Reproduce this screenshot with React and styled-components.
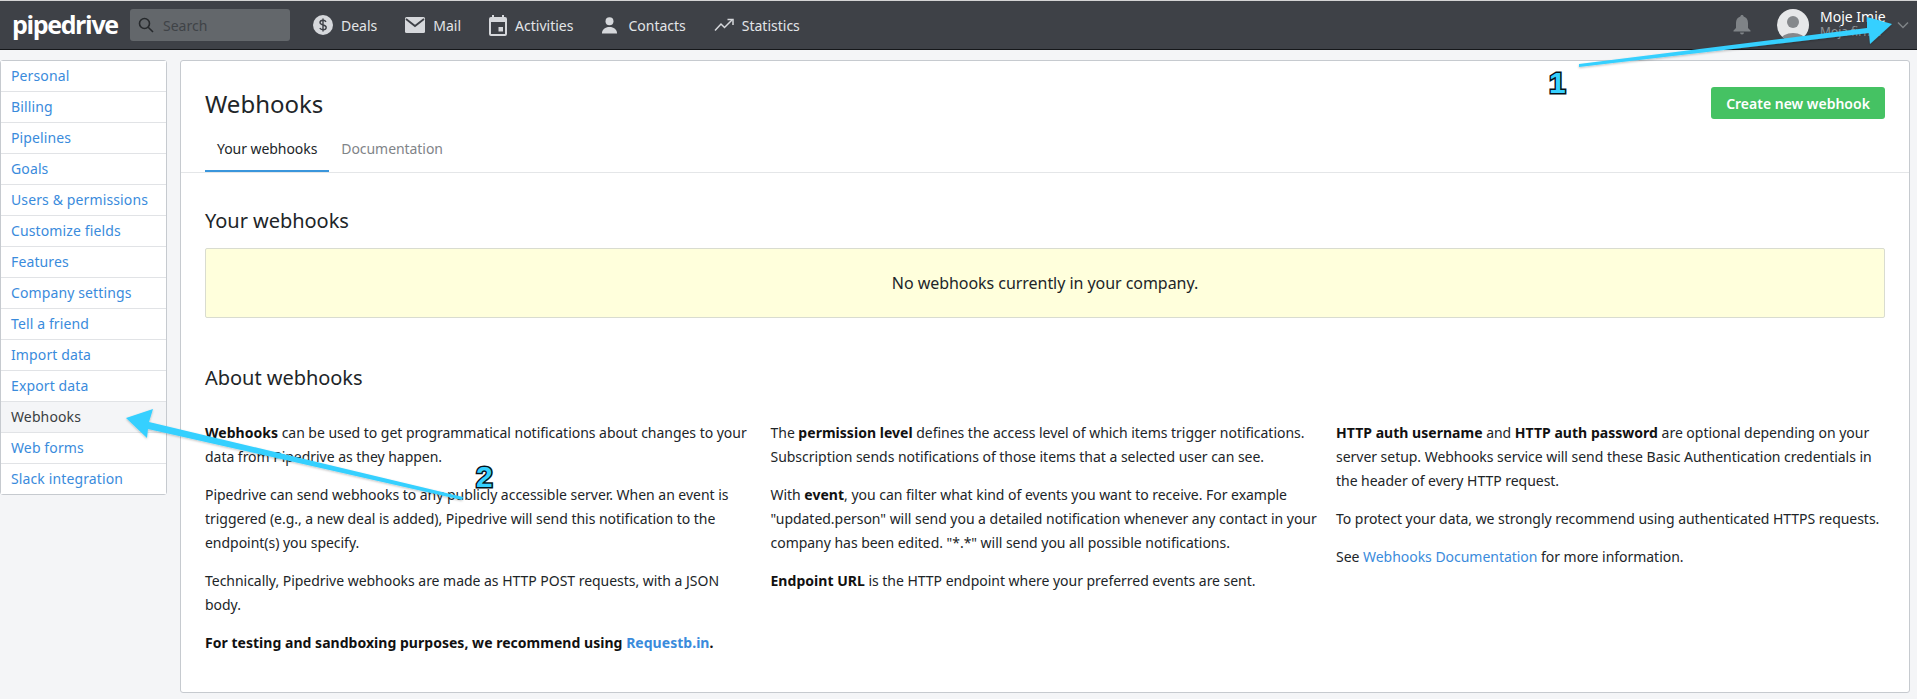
import React from "react";
import styled, { createGlobalStyle } from "styled-components";

const Global = createGlobalStyle`
  html, body { margin: 0; padding: 0; background: #f4f5f7; }
  body { font-family: "Noto Sans", "Open Sans", sans-serif; font-size: 14px; color: #212528; overflow: hidden; }
  * { box-sizing: border-box; }
`;

const Page = styled.div`
  position: relative;
  width: 1917px;
  height: 699px;
  overflow: hidden;
`;

const TopBar = styled.header`
  height: 50px;
  background: #3e4147;
  border-top: 1px solid #d4d4d4;
  border-bottom: 1px solid #15171a;
  display: flex;
  align-items: center;
  padding: 0 8px 0 12px;
  color: #fff;
`;

const Logo = styled.div`
  font-family: "Open Sans", sans-serif;
  font-size: 25px;
  font-weight: 700;
  letter-spacing: -1.35px;
  line-height: 26px;
  width: 118px;
  flex: 0 0 auto;
  white-space: nowrap;
  margin-top: -2px;
`;

const Search = styled.div`
  width: 160px;
  height: 32px;
  background: #63676b;
  border-radius: 3px;
  display: flex;
  align-items: center;
  gap: 8px;
  padding-left: 7px;
  color: #3f4347;
  font-size: 14px;
`;

const Nav = styled.nav`
  display: flex;
  align-items: center;
  margin-left: 23px;
  gap: 28px;
`;

const NavItem = styled.a`
  display: flex;
  align-items: center;
  gap: ${p => p.$gap || 8}px;
  color: #e3e5e8;
  font-size: 14px;
  white-space: nowrap;
`;

const Right = styled.div`
  margin-left: auto;
  display: flex;
  align-items: center;
`;

const Avatar = styled.div`
  width: 32px;
  height: 32px;
  border-radius: 50%;
  margin-left: 26px;
  overflow: hidden;
  background: #e6e7e9;
`;

const UserBlock = styled.div`
  margin-left: 11px;
  width: 77px;
  line-height: 15px;
  margin-top: -3px;
`;

const UserName = styled.div`
  font-size: 14px;
  color: #fff;
  white-space: nowrap;
`;

const UserSub = styled.div`
  font-size: 12px;
  color: #8f9397;
  white-space: nowrap;
`;

const Body = styled.div`
  display: flex;
  align-items: flex-start;
  padding-top: 10px;
  gap: 13px;
`;

const Side = styled.ul`
  list-style: none;
  margin: 0;
  padding: 0;
  width: 167px;
  flex: 0 0 auto;
  background: #fff;
  border: 1px solid #c6cacf;
  border-radius: 3px;
`;

const SideItem = styled.li`
  height: ${p => (p.$first ? 30 : 31)}px;
  line-height: 30px;
  padding-left: 10px;
  font-size: 14px;
  letter-spacing: 0.12px;
  color: ${p => (p.$active ? "#3a3e42" : "#3a8bdc")};
  background: ${p => (p.$active ? "#f4f5f7" : "#fff")};
  border-top: ${p => (p.$first ? "0" : "1px solid #e1e3e6")};
`;

const Panel = styled.main`
  width: 1730px;
  height: 633px;
  background: #fff;
  border: 1px solid #c6cacf;
  border-radius: 3px;
`;

const PanelHead = styled.div`
  height: 112px;
  border-bottom: 1px solid #e4e6e8;
  padding: 26px 24px 0;
  display: flex;
  flex-direction: column;
  position: relative;
`;

const Title = styled.h1`
  margin: 0;
  font-size: 24px;
  font-weight: 400;
  line-height: 34px;
  color: #212528;
`;

const Tabs = styled.div`
  display: flex;
  margin-top: 12px;
  margin-bottom: -1px;
`;

const Tab = styled.div`
  height: 39px;
  line-height: 32px;
  padding: 0 12px;
  font-size: 14px;
  letter-spacing: -0.06px;
  color: ${p => (p.$active ? "#212528" : "#7f8488")};
  border-bottom: 2px solid ${p => (p.$active ? "#3a96dc" : "transparent")};
  white-space: nowrap;
`;

const CreateButton = styled.button`
  position: absolute;
  right: 24px;
  top: 26px;
  width: 174px;
  height: 32px;
  padding: 0;
  border: 0;
  border-radius: 3px;
  background: #45c263;
  color: #fff;
  font-family: inherit;
  font-weight: 600;
  font-size: 14px;
`;

const Content = styled.div`
  padding: 0 24px;
`;

const H2 = styled.h2`
  margin: 0;
  font-size: 20px;
  font-weight: 400;
  line-height: 28px;
  letter-spacing: -0.04px;
  color: #212528;
  margin-top: ${p => p.$top}px;
`;

const Notice = styled.div`
  height: 70px;
  margin-top: 13px;
  background: #ffffdc;
  border: 1px solid #d9dcd0;
  border-radius: 2px;
  display: flex;
  align-items: center;
  justify-content: center;
  font-size: 16px;
  letter-spacing: -0.05px;
  color: #212528;
`;

const Columns = styled.div`
  display: grid;
  grid-template-columns: 565.5px 565.5px 549px;
  margin-top: 29px;
`;

const Col = styled.div`
  width: 549px;
`;

const Para = styled.p`
  margin: 0 0 14px;
  line-height: 24px;
  font-size: 14px;
  letter-spacing: -0.03px;
  color: #212528;
  b { font-weight: 700; color: #111; letter-spacing: 0.03px; }
  a { color: #3a8bdc; }
`;

const Overlay = styled.svg`
  position: absolute;
  left: 0;
  top: 0;
  pointer-events: none;
`;

const Callout = styled.span`
  position: absolute;
  font-family: "Liberation Sans", sans-serif;
  font-weight: 700;
  font-size: 30px;
  line-height: 30px;
  color: #36d0ff;
  -webkit-text-stroke: 3px #06121a;
  paint-order: stroke fill;
  left: ${p => p.$x}px;
  top: ${p => p.$y}px;
`;

const ic = "#d6d8dc";

const SearchIcon = () => (
  <svg width="18" height="18" viewBox="0 0 18 18" fill="none" stroke="#26292c" strokeWidth="1.6">
    <circle cx="7.500" cy="7.500" r="5" />
    <path d="M11.200 11.200 16 16" />
  </svg>
);
const DealsIcon = () => (
  <svg width="20" height="20" viewBox="0 0 20 20">
    <circle cx="10" cy="10" r="10" fill={ic} />
    <path d="M13 6.800c-.6-1-1.700-1.500-3-1.500-1.700 0-3 .9-3 2.300 0 3.100 6.200 1.600 6.200 4.800 0 1.400-1.400 2.300-3.200 2.300-1.400 0-2.600-.6-3.200-1.700M10 3.600v12.800" fill="none" stroke="#3e4147" strokeWidth="1.400" />
  </svg>
);
const MailIcon = () => (
  <svg width="20" height="16" viewBox="0 0 20 16">
    <rect width="20" height="16" rx="1.500" fill={ic} />
    <path d="M1 2l9 7 9-7" fill="none" stroke="#3e4147" strokeWidth="1.800" />
  </svg>
);
const ActivitiesIcon = () => (
  <svg width="18" height="21" viewBox="0 0 18 21">
    <path d="M3 0h2v2h8V0h2v2h1a2 2 0 0 1 2 2v15a2 2 0 0 1-2 2H2a2 2 0 0 1-2-2V4a2 2 0 0 1 2-2h1z" fill={ic} />
    <rect x="2" y="7" width="14" height="12" fill="#3e4147" />
    <rect x="9.500" y="12" width="4.500" height="4.500" fill={ic} />
  </svg>
);
const ContactsIcon = () => (
  <svg width="17" height="18" viewBox="0 0 18 18" fill={ic}>
    <circle cx="9" cy="5" r="4.200" />
    <path d="M1 18c0-4.500 3.500-7 8-7s8 2.500 8 7z" />
  </svg>
);
const StatsIcon = () => (
  <svg width="20" height="14" viewBox="0 0 20 14" fill="none" stroke={ic} strokeWidth="1.500">
    <path d="M1 12.500 7 6l3.500 3.500L18 2" />
    <path d="M13.500 1.500H19V7" />
  </svg>
);
const BellIcon = () => (
  <svg width="18" height="20" viewBox="0 0 18 20" fill="#7f8387">
    <path d="M9 0c1 0 1.600.7 1.600 1.600C13.500 2.400 15 4.800 15 8v5l2.500 2.500v1H.5v-1L3 13V8c0-3.200 1.500-5.600 4.400-6.400C7.400.7 8 0 9 0z" />
    <path d="M7 17.500h4a2 2 0 0 1-4 0z" />
  </svg>
);
const ChevronIcon = () => (
  <svg width="12" height="8" viewBox="0 0 12 8" fill="none" stroke="#7f8387" strokeWidth="1.500">
    <path d="M1 1.500 6 6.500 11 1.500" />
  </svg>
);
const AvatarArt = () => (
  <svg width="32" height="32" viewBox="0 0 32 32">
    <circle cx="16" cy="13" r="6" fill="#85888c" />
    <ellipse cx="16" cy="31" rx="12" ry="7" fill="#85888c" />
  </svg>
);

const menu = ["Personal", "Billing", "Pipelines", "Goals", "Users & permissions", "Customize fields", "Features", "Company settings", "Tell a friend", "Import data", "Export data", "Webhooks", "Web forms", "Slack integration"];

export default function App() {
  return (
    <Page>
      <Global />
      <TopBar>
        <Logo>pipedrive</Logo>
        <Search><SearchIcon /><span>Search</span></Search>
        <Nav>
          <NavItem><DealsIcon />Deals</NavItem>
          <NavItem><MailIcon />Mail</NavItem>
          <NavItem><ActivitiesIcon />Activities</NavItem>
          <NavItem $gap={10}><ContactsIcon />Contacts</NavItem>
          <NavItem><StatsIcon />Statistics</NavItem>
        </Nav>
        <Right>
          <BellIcon />
          <Avatar><AvatarArt /></Avatar>
          <UserBlock>
            <UserName>Moje Imie</UserName>
            <UserSub>Moja firma</UserSub>
          </UserBlock>
          <ChevronIcon />
        </Right>
      </TopBar>
      <Body>
        <Side>
          {menu.map((m, i) => (
            <SideItem key={m} $first={i === 0} $active={m === "Webhooks"}>{m}</SideItem>
          ))}
        </Side>
        <Panel>
          <PanelHead>
            <Title>Webhooks</Title>
            <Tabs>
              <Tab $active>Your webhooks</Tab>
              <Tab>Documentation</Tab>
            </Tabs>
            <CreateButton>Create new webhook</CreateButton>
          </PanelHead>
          <Content>
            <H2 $top={34}>Your webhooks</H2>
            <Notice>No webhooks currently in your company.</Notice>
            <H2 $top={46}>About webhooks</H2>
            <Columns>
              <Col>
                <Para><b>Webhooks</b> can be used to get programmatical notifications about changes to your data from Pipedrive as they happen.</Para>
                <Para>Pipedrive can send webhooks to any publicly accessible server. When an event is triggered (e.g., a new deal is added), Pipedrive will send this notification to the endpoint(s) you specify.</Para>
                <Para>Technically, Pipedrive webhooks are made as HTTP POST requests, with a JSON body.</Para>
                <Para><b>For testing and sandboxing purposes, we recommend using <a>Requestb.in</a>.</b></Para>
              </Col>
              <Col>
                <Para>The <b>permission level</b> defines the access level of which items trigger notifications. Subscription sends notifications of those items that a selected user can see.</Para>
                <Para>With <b>event</b>, you can filter what kind of events you want to receive. For example "updated.person" will send you a detailed notification whenever any contact in your company has been edited. "*.*" will send you all possible notifications.</Para>
                <Para><b>Endpoint URL</b> is the HTTP endpoint where your preferred events are sent.</Para>
              </Col>
              <Col>
                <Para><b>HTTP auth username</b> and <b>HTTP auth password</b> are optional depending on your server setup. Webhooks service will send these Basic Authentication credentials in the header of every HTTP request.</Para>
                <Para>To protect your data, we strongly recommend using authenticated HTTPS requests.</Para>
                <Para>See <a>Webhooks Documentation</a> for more information.</Para>
              </Col>
            </Columns>
          </Content>
        </Panel>
      </Body>
      <Overlay width="1917" height="699" viewBox="0 0 1917 699">
        <defs>
          <filter id="sh" x="-5%" y="-30%" width="110%" height="160%">
            <feDropShadow dx="0" dy="1" stdDeviation="1" floodColor="#000" floodOpacity="0.25" />
          </filter>
        </defs>
        <path filter="url(#sh)" fill="#36d0ff" d="M1579 64 1867 28 1867 17 1892 24 1870 44 1869 33 1579 67z" />
        <path filter="url(#sh)" fill="#36d0ff" d="M126 418 153 409 149 422 463 497 462 500 148 429 147 438z" />
      </Overlay>
      <Callout $x={1549} $y={68}>1</Callout>
      <Callout $x={476} $y={462}>2</Callout>
    </Page>
  );
}
